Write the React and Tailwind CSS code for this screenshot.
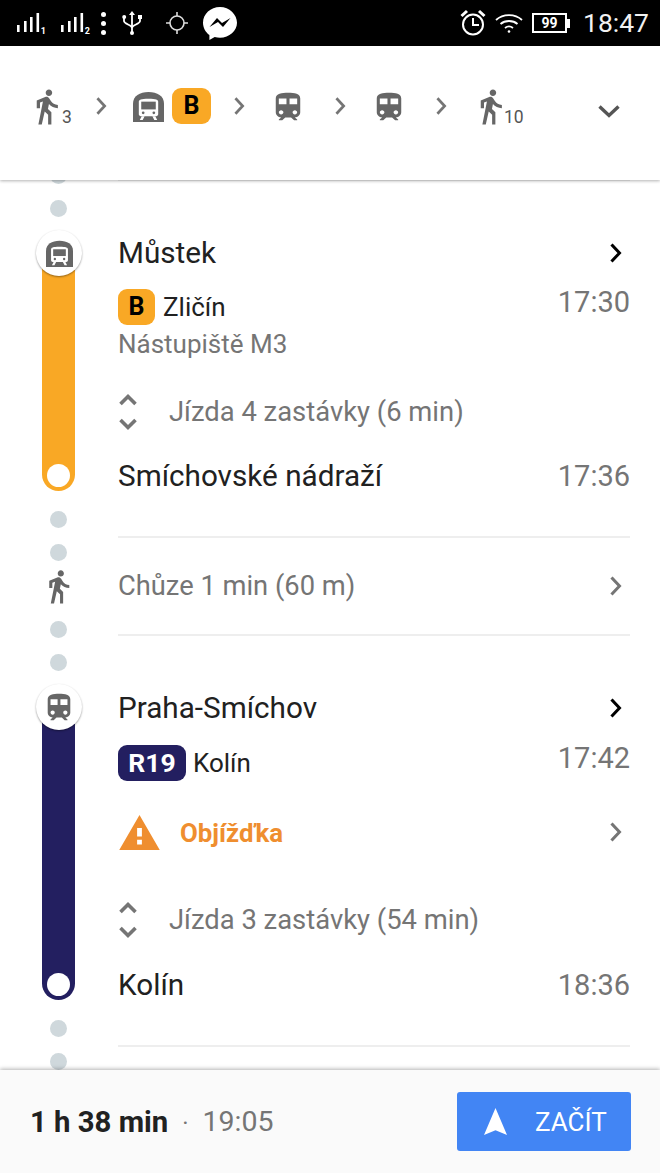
const WALK = "M13.5 5.5c1.1 0 2-.9 2-2s-.9-2-2-2-2 .9-2 2 .9 2 2 2zM9.8 8.9L7 23h2.1l1.8-8 2.1 2v6h2v-7.5l-2.1-2 .6-3C14.8 12 16.8 13 19 13v-2c-1.9 0-3.5-1-4.3-2.4l-1-1.6c-.4-.6-1-1-1.7-1-.3 0-.5.1-.8.1L6 8.3V13h2V9.6l1.8-.7";
const TRAIN = "M12 2c-4 0-8 .5-8 4v9.5C4 17.43 5.57 19 7.5 19L6 20.5v.5h2.23l2-2H14l2 2h2v-.5L16.5 19c1.93 0 3.5-1.57 3.5-3.5V6c0-3.5-3.58-4-8-4zM7.5 17c-.83 0-1.5-.67-1.5-1.5S6.67 14 7.5 14s1.5.67 1.5 1.5S8.33 17 7.5 17zm3.5-7H6V6h5v4zm2 0V6h5v4h-5zm3.5 7c-.83 0-1.5-.67-1.5-1.5s.67-1.5 1.5-1.5 1.5.67 1.5 1.5-.67 1.5-1.5 1.5z";

function Walk({ className }) {
  return <svg viewBox="0 0 24 24" className={className} fill="#666"><path d={WALK} /></svg>;
}
function Train({ className }) {
  return <svg viewBox="3.500 1.500 17 20" preserveAspectRatio="none" className={className} fill="#666"><path d={TRAIN} /></svg>;
}
function Metro({ className }) {
  return (
    <svg viewBox="0 0 32 32" className={className}>
      <path d="M0 32V13C0 5 7 1 16 1s16 4 16 12v19z" fill="#666" />
      <path d="M6 24V11c0-2 2-3 10-3s10 1 10 3v13c0 1-1 2-2 2H8c-1 0-2-1-2-2z" fill="#fff" />
      <rect x="8.500" y="11" width="15" height="8" fill="#666" />
      <circle cx="10.500" cy="22.500" r="1.400" fill="#666" />
      <circle cx="21.500" cy="22.500" r="1.400" fill="#666" />
      <path d="M9 26l-2 4h3l2-4zM23 26l2 4h-3l-2-4z" fill="#fff" />
    </svg>
  );
}
function Chev({ className, color = "#757575", w = 3 }) {
  return (
    <svg viewBox="0 0 12 20" className={className} fill="none" stroke={color} strokeWidth={w} strokeLinecap="square" strokeLinejoin="miter">
      <path d="M2.500 2.500L9.500 10L2.500 17.500" />
    </svg>
  );
}
function UpDown() {
  return (
    <svg viewBox="0 0 20 38" className="w-[20px] h-[38px] shrink-0" fill="none" stroke="#757575" strokeWidth="3.600">
      <path d="M2.500 11L10 3.500L17.500 11M2.500 27L10 34.500L17.500 27" />
    </svg>
  );
}
function Dot() {
  return <div className="w-[17px] h-[17px] rounded-full bg-[#cfd8dc] shrink-0" />;
}
function Signal({ n }) {
  return (
    <div className="flex items-end w-[29px] h-[20px] relative">
      <svg viewBox="0 0 29 20" className="w-[29px] h-[20px]" fill="#fff">
        <rect x="1" y="12" width="2.600" height="7" />
        <rect x="8" y="8" width="2.600" height="11" />
        <rect x="14" y="4" width="2.600" height="15" />
        <rect x="20.500" y="0" width="2.600" height="19" />
      </svg>
      <span className="absolute right-[-1px] bottom-[-3px] text-[9px] leading-none font-bold text-white">{n}</span>
    </div>
  );
}
function StatusBar() {
  return (
    <div className="h-[46px] bg-black flex items-center text-white shrink-0">
      <div className="ml-[16px]"><Signal n="1" /></div>
      <div className="ml-[15px]"><Signal n="2" /></div>
      <div className="ml-[12px] flex flex-col gap-[4px]">
        <div className="w-[5px] h-[5px] rounded-full bg-white" />
        <div className="w-[5px] h-[5px] rounded-full bg-white" />
        <div className="w-[5px] h-[5px] rounded-full bg-white" />
      </div>
      <svg viewBox="0 0 20 24" className="ml-[16px] w-[20px] h-[24px]" fill="none" stroke="#fff" strokeWidth="1.800">
        <path d="M10 3v19M2 6v4c0 3 8 4 8 7M18 6v4c0 3-8 4-8 7" />
        <path d="M10 0l3 4H7z" fill="#fff" stroke="none" />
        <circle cx="2.200" cy="6" r="2" fill="#fff" stroke="none" />
        <rect x="16" y="4" width="4" height="4" fill="#fff" stroke="none" />
        <circle cx="10" cy="22" r="2" fill="#fff" stroke="none" />
      </svg>
      <svg viewBox="0 0 22 22" className="ml-[24px] w-[22px] h-[22px]" fill="none" stroke="#ddd" strokeWidth="1.600">
        <circle cx="11" cy="11" r="7" />
        <path d="M11 0v4M11 18v4M0 11h4M18 11h4" />
      </svg>
      <svg viewBox="0 0 34 33" className="ml-[15px] w-[34px] h-[33px]">
        <path d="M17 0C7.600 0 0 7 0 15.700c0 5 2.500 9.400 6.400 12.300V33l5.300-3c1.700.5 3.500.7 5.300.7 9.400 0 17-7 17-15S26.400 0 17 0z" fill="#fff" />
        <path d="M6.500 20l7.500-9 5 5 8.500-5-7.500 9-5-5z" fill="#000" />
      </svg>
      <div className="flex-1" />
      <svg viewBox="0 0 26 28" className="w-[26px] h-[28px]" fill="none" stroke="#fff" strokeWidth="2">
        <circle cx="13" cy="15.500" r="10" />
        <path d="M13 9v7h6" />
        <path d="M1.500 7L7 2M24.500 7L19 2" strokeWidth="3" />
      </svg>
      <svg viewBox="0 0 28 20" className="ml-[9px] w-[28px] h-[20px]" fill="none" stroke="#fff" strokeWidth="1.800">
        <path d="M1 7c7-6.500 19-6.500 26 0" />
        <path d="M5.500 11c4.500-4 12.500-4 17 0" />
        <path d="M10 15c2.500-2 5.500-2 8 0" />
        <circle cx="14" cy="18.500" r="1.300" fill="#fff" stroke="none" />
      </svg>
      <div className="ml-[9px] flex items-center">
        <div className="w-[35px] h-[20px] border-2 border-white flex items-center justify-center text-[14px] leading-none font-bold font-['Roboto',sans-serif] text-white">99</div>
        <div className="w-[3px] h-[9px] bg-white" />
      </div>
      <div className="ml-[13px] mr-[11px] text-[26.500px] leading-none font-['Roboto',sans-serif] text-[#f2f2f2]">18:47</div>
    </div>
  );
}
function Header() {
  return (
    <div className="relative z-10 h-[134px] bg-white shadow-[0_1px_3px_rgba(0,0,0,0.3)] flex items-start pt-[41px] shrink-0">
      <div className="h-[38px] flex items-center w-full">
        <Walk className="ml-[27px] w-[39px] h-[39px] shrink-0" />
        <span className="self-end ml-[-4px] mb-[-2px] text-[17.500px] leading-[20px] text-[#555] w-[11px]">3</span>
        <Chev className="ml-[23px] w-[11px] h-[18px]" />
        <div className="ml-[26px]"><Metro className="w-[31px] h-[31px]" /></div>
        <div className="ml-[8px] w-[39px] h-[36px] rounded-[9px] bg-[#f9a825] flex items-center justify-center text-[25px] font-bold text-black">B</div>
        <Chev className="ml-[23px] w-[11px] h-[18px]" />
        <Train className="ml-[30px] w-[26px] h-[29px]" />
        <Chev className="ml-[34px] w-[11px] h-[18px]" />
        <Train className="ml-[30px] w-[26px] h-[29px]" />
        <Chev className="ml-[34px] w-[11px] h-[18px]" />
        <Walk className="ml-[24px] w-[39px] h-[39px] shrink-0" />
        <span className="self-end ml-[-6px] mb-[-2px] text-[17.500px] leading-[20px] text-[#555]">10</span>
        <svg viewBox="0 0 24 14" className="ml-[73px] mt-[10px] w-[24px] h-[14px]" fill="none" stroke="#555" strokeWidth="3.400">
          <path d="M2.500 2.500L12 11.500L21.500 2.500" />
        </svg>
      </div>
    </div>
  );
}
function Leg({ color, icon, children }) {
  return (
    <div className="flex shrink-0">
      <div className="relative w-[118px] flex flex-col items-center pr-[1px] shrink-0">
        <div className={`flex-1 w-[33px] mt-[22px] rounded-b-[17px] flex flex-col items-center justify-end pb-[4px] ${color}`}>
          <div className="w-[23px] h-[23px] rounded-full bg-white" />
        </div>
        <div className="absolute top-0 left-[36px] w-[46px] h-[46px] rounded-full bg-white shadow-[0_1px_2px_rgba(0,0,0,0.4)] flex items-center justify-center">
          {icon}
        </div>
      </div>
      <div className="flex-1 pr-[30px] flex flex-col">{children}</div>
    </div>
  );
}
const title = "text-[29.700px] leading-[30px] text-[#212121]";
const time = "text-[29px] leading-[36px] text-[#757575]";
const ride = "text-[27.400px] leading-[36px] text-[#757575] ml-[31px]";
function TitleRow({ children }) {
  return (
    <div className="h-[46px] flex items-center justify-between">
      <span className={title}>{children}</span>
      <Chev className="w-[12px] h-[20px] mr-[8px]" color="#000" />
    </div>
  );
}
function Connector({ children }) {
  return <div className="flex flex-col items-center gap-[16px]">{children}</div>;
}
function App() {
  return (
    <div className="w-[660px] h-[1173px] flex flex-col overflow-hidden bg-white font-['Roboto',sans-serif]">
      <StatusBar />
      <Header />
      <div className="flex-1 overflow-hidden -mt-[13px] flex flex-col">
        <div className="flex h-[63px] shrink-0">
          <div className="w-[118px] pr-[1px]"><Connector><Dot /><Dot /></Connector></div>
          <div className="flex-1 mr-[30px] h-[14px] border-b-2 border-[#eeeeee]" />
        </div>
        <Leg color="bg-[#f9a825]" icon={<Metro className="w-[27px] h-[27px]" />}>
          <TitleRow>Můstek</TitleRow>
          <div className="flex justify-between items-start">
            <div className="flex flex-col">
              <div className="mt-[13px] h-[36px] flex items-center">
                <div className="w-[37px] h-[36px] rounded-[9px] bg-[#f9a825] flex items-center justify-center text-[25px] font-bold text-black">B</div>
                <span className="ml-[8px] text-[26px] text-[#212121]">Zličín</span>
              </div>
              <div className="h-[38px] flex items-center text-[26px] text-[#757575]">Nástupiště M3</div>
            </div>
            <span className={`${time} mt-[8px]`}>17:30</span>
          </div>
          <div className="mt-[31px] h-[36px] flex items-center">
            <UpDown />
            <span className={ride}>Jízda 4 zastávky (6 min)</span>
          </div>
          <div className="mt-[31px] h-[30px] flex items-center justify-between">
            <span className={title}>Smíchovské nádraží</span>
            <span className={time}>17:36</span>
          </div>
        </Leg>
        <div className="flex h-[193px] shrink-0">
          <div className="w-[118px] pr-[1px] pt-[20px] flex flex-col items-center">
            <Connector><Dot /><Dot /></Connector>
            <Walk className="w-[37px] h-[37px] mt-[7px] mb-[16px]" />
            <Connector><Dot /><Dot /></Connector>
          </div>
          <div className="flex-1 mr-[30px] mt-[45px] flex flex-col">
            <div className="h-[2px] bg-[#eeeeee]" />
            <div className="h-[96px] flex items-center justify-between">
              <span className="text-[27.300px] text-[#757575]">Chůze 1 min (60 m)</span>
              <Chev className="w-[12px] h-[20px] mr-[8px]" />
            </div>
            <div className="h-[2px] bg-[#eeeeee]" />
          </div>
        </div>
        <Leg color="bg-[#231f60]" icon={<Train className="w-[24px] h-[28px]" />}>
          <div className="mt-[1px]"><TitleRow>Praha-Smíchov</TitleRow></div>
          <div className="flex justify-between items-start">
            <div className="mt-[14px] h-[36px] flex items-center">
              <div className="w-[68px] h-[36px] rounded-[9px] bg-[#231f60] flex items-center justify-center text-[26.500px] font-bold text-white">R19</div>
              <span className="ml-[7px] text-[26px] text-[#212121]">Kolín</span>
            </div>
            <span className={`${time} mt-[9px]`}>17:42</span>
          </div>
          <div className="mt-[31px] h-[40px] flex items-center">
            <svg viewBox="1 2 22 19" className="w-[41px] h-[35px] ml-[1px] shrink-0" fill="#ef8e2f">
              <path d="M1 21h22L12 2 1 21zm12.300-3h-2.600v-2.600h2.600V18zm0-4.300h-2.600V9h2.600v4.700z" />
            </svg>
            <span className="ml-[20px] mt-[2px] text-[25.800px] font-bold text-[#ef8e2f]">Objížďka</span>
            <div className="flex-1" />
            <Chev className="w-[12px] h-[20px] mr-[8px]" />
          </div>
          <div className="mt-[50px] h-[36px] flex items-center">
            <UpDown />
            <span className={ride}>Jízda 3 zastávky (54 min)</span>
          </div>
          <div className="mt-[32px] h-[30px] flex items-center justify-between">
            <span className={title}>Kolín</span>
            <span className={time}>18:36</span>
          </div>
        </Leg>
        <div className="flex shrink-0">
          <div className="w-[118px] pr-[1px] pt-[20px]"><Connector><Dot /><Dot /></Connector></div>
          <div className="flex-1 mr-[30px] mt-[45px] h-[2px] bg-[#eeeeee]" />
        </div>
      </div>
      <div className="relative z-10 h-[103px] shrink-0 bg-[#fafafa] shadow-[0_-1px_4px_rgba(0,0,0,0.3)] flex items-center pl-[30px] pr-[29px]">
        <span className="mt-[2px] text-[29.300px] font-bold text-[#212121]">1 h 38 min</span>
        <span className="ml-[14px] mt-[2px] text-[24px] text-[#757575]">·</span>
        <span className="ml-[14px] mt-[2px] text-[28.500px] text-[#757575]">19:05</span>
        <div className="flex-1" />
        <div className="w-[174px] h-[59px] rounded-[3px] bg-[#4285f4] flex items-center">
          <svg viewBox="0 0 24 28" className="ml-[27px] w-[23px] h-[27px]" fill="#fff"><path d="M12 0L24 28L12 23L0 28z" /></svg>
          <span className="ml-[28px] mt-[1px] text-[26px] text-white">ZAČÍT</span>
        </div>
      </div>
    </div>
  );
}
export default App;
